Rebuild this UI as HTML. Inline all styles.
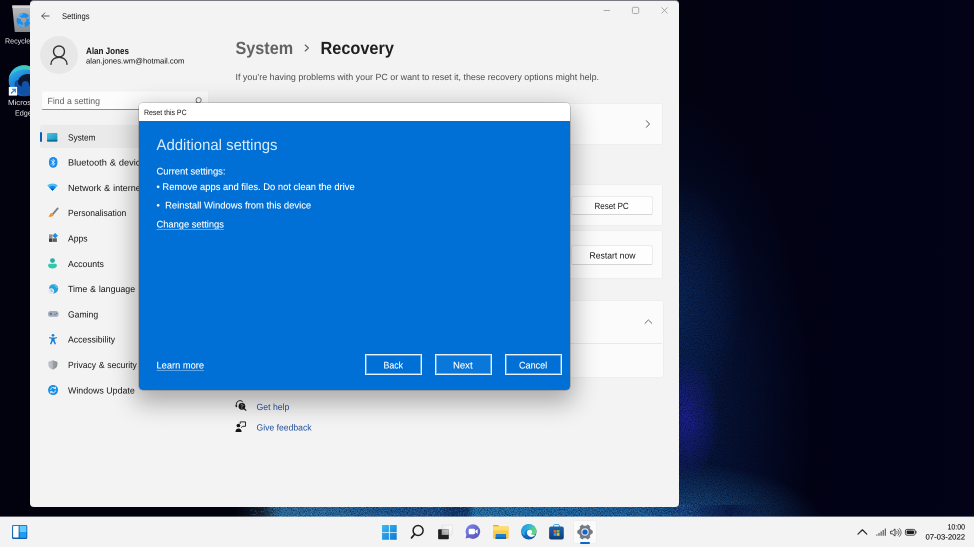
<!DOCTYPE html>
<html lang="en">
<head>
<meta charset="utf-8">
<title>Settings - System - Recovery</title>
<style>
*{box-sizing:border-box;margin:0;padding:0}
html,body{width:974px;height:547px;overflow:hidden}
body{position:relative;background:#02020f;font-family:"Liberation Sans",sans-serif;color:#1c1c1c}
.abs{position:absolute}
svg{position:absolute;overflow:visible}
.t{position:absolute;white-space:pre;line-height:1;will-change:transform;transform-origin:0 0;text-rendering:geometricPrecision}
.s{display:inline-block;transform-origin:0 0}
.layer{position:absolute;left:0;top:0;width:974px;height:547px}
#desk{overflow:hidden;
 background:
  radial-gradient(ellipse 34px 62px at 686px 418px, rgba(30,34,156,.85), rgba(30,34,156,0) 100%),
  radial-gradient(ellipse 135px 60px at 688px 524px, rgba(30,90,150,.95), rgba(30,90,150,0) 100%),
  radial-gradient(ellipse 70px 120px at 674px 300px, rgba(12,44,100,.8), rgba(12,44,100,0) 100%),
  radial-gradient(ellipse 150px 330px at 662px 420px, rgba(10,34,86,.9), rgba(10,34,86,0) 100%),
  linear-gradient(90deg,#02020e 0%,#02020e 60%,#020216 85%,#020218 100%);}
#strip{position:absolute;left:0;top:505px;width:974px;height:12px;
 background:linear-gradient(90deg,rgba(2,2,14,0) 0px,rgba(2,2,14,0) 235px,#14222f 262px,#2f6f9f 280px,#2a6da3 330px,#1f5c96 380px,#1b4f8c 440px,#123a6e 452px,#123a6e 468px,#2676ae 474px,#1f6aa6 560px,#1d5f9c 640px,#163f7c 690px,#0b1d4c 730px,rgba(2,2,20,0) 770px)}
#win{position:absolute;left:30px;top:0;width:649px;height:507px;border-top:1px solid #777a80;background:#f3f3f3;border-radius:4px;overflow:hidden}
#wi{position:absolute;left:-30px;top:-1px;width:974px;height:547px}
#task{position:absolute;left:0;top:516px;width:974px;height:31px;background:#f3f3f3;background-clip:padding-box;border-top:1px solid rgba(243,243,243,.4)}
#ti{position:absolute;left:0;top:-517px;width:974px;height:547px}
.card{position:absolute;background:#fbfbfb;border:.8px solid #eeeeee;border-radius:2.5px}
.btn{position:absolute;background:#fefefe;border:.8px solid #ebebeb;border-bottom-color:#d6d6d6;border-radius:2.5px}
#dlg{position:absolute;left:139.2px;top:102.5px;width:430.6px;height:287.3px;border-radius:4px;background:linear-gradient(#fff 0,#fff 18.4px,#0070d6 18.4px);overflow:hidden}
#di{position:absolute;left:-139.2px;top:-102.5px;width:974px;height:547px}
#dlgsh{position:absolute;left:139.2px;top:102.5px;width:430.6px;height:287.3px;border-radius:4px;box-shadow:0 9px 24px 4px rgba(0,0,0,.3),0 0 0 .6px rgba(90,90,90,.45)}
#dlgbar{position:absolute;left:139px;top:102px;width:431px;height:19.3px;background:#fff}
.dbtn{position:absolute;top:354px;width:57.5px;height:21px;border:1px solid #e6f3ff;box-shadow:inset 0 0 0 1px rgba(230,243,255,.42);background:#0070d6}
</style>
</head>
<body>
<div id="desk" class="layer"></div>
<div id="strip"></div>
<svg style="left:230px;top:100px" width="600" height="417" viewBox="0 0 600 417">
  <defs>
    <filter id="grain" x="0" y="0" width="100%" height="100%" color-interpolation-filters="sRGB">
      <feTurbulence type="fractalNoise" baseFrequency="0.85" numOctaves="2" seed="7" result="n"/>
      <feColorMatrix in="n" type="matrix" values="0 0 0 0 0.01  0 0 0 0 0.02  0 0 0 0 0.08  2.600 0 0 0 -1.050"/>
    </filter>
    <filter id="grain2" x="0" y="0" width="100%" height="100%" color-interpolation-filters="sRGB">
      <feTurbulence type="fractalNoise" baseFrequency="0.7" numOctaves="2" seed="3" result="n"/>
      <feColorMatrix in="n" type="matrix" values="0 0 0 0 0.35  0 0 0 0 0.62  0 0 0 0 0.85  0 2.400 0 0 -1.250"/>
    </filter>
  </defs>
  <rect x="0" y="0" width="600" height="417" filter="url(#grain)" opacity=".55"/>
  <rect x="20" y="404" width="450" height="13" filter="url(#grain2)" opacity=".5"/>
</svg>

<div id="icons" class="layer">
  <svg style="left:0;top:0" width="60" height="120" viewBox="0 0 60 120">
    <defs>
      <linearGradient id="rb1" x1="0" y1="0" x2="0" y2="1"><stop offset="0" stop-color="#bdbfc2"/><stop offset="1" stop-color="#85888d"/></linearGradient>
      <linearGradient id="eg1" x1="0" y1="0" x2=".6" y2="1"><stop offset="0" stop-color="#3cc4ec"/><stop offset=".45" stop-color="#1f8bdc"/><stop offset="1" stop-color="#135fb8"/></linearGradient>
      <linearGradient id="eg2" x1="0" y1="0" x2="1" y2="0"><stop offset="0" stop-color="#38bfe6"/><stop offset="1" stop-color="#48d196"/></linearGradient>
      <clipPath id="ecl"><circle cx="24.200" cy="80.800" r="15.500"/></clipPath>
    </defs>
    <!-- recycle bin -->
    <path d="M12.200 5.400h24l-2.500 26.500H14.800z" fill="url(#rb1)"/>
    <path d="M12.200 5.400h24l-.25 2.600H12.450z" fill="#d2d4d6"/>
    <circle cx="23.600" cy="20.200" r="4.900" fill="none" stroke="#1f8de9" stroke-width="4.400" stroke-dasharray="8.100 2.160" transform="rotate(-20 23.600 20.200)"/>
    <circle cx="23.600" cy="20.200" r="6.100" fill="none" stroke="#56b2f6" stroke-width="1.600" stroke-dasharray="5.500 7.280" transform="rotate(-35 23.600 20.200)"/>
    <!-- edge -->
    <circle cx="24.200" cy="80.800" r="15.500" fill="url(#eg1)"/>
    <g clip-path="url(#ecl)">
      <path d="M8.700 78c1-9 8-13 15.500-13s14 4 15.500 12c-3-5-9-7.500-15.500-7.500S12 73 8.700 78z" fill="url(#eg2)"/>
      <path d="M14.500 84c0 7.500 6.500 13 14 13 5 0 9-2 11-5V80H18c-2 0-3.500 2-3.500 4z" fill="#1252a6"/>
      <path d="M18 82.500c0-5 4.500-8.500 9.500-8.500 5.500 0 9.500 3.500 9.500 8 0 3-2 5-5 5-2 0-3-1-3-2.500 0-3-3-4.500-5.500-3-1.500 1-2 3-1.500 5-2-.500-4-2-4-4z" fill="#0b1734"/>
    </g>
    <rect x="8.800" y="86.900" width="8.300" height="8.700" fill="#fff"/>
    <path d="M11 93.500l4.200-4.200m-3.200-.1h3.300v3.300" stroke="#2a7fd8" stroke-width="1.100" fill="none"/>
  </svg>
<div class="t" style="left:5px;top:38px;font-size:14.8px;color:#e6e6e6;transform:scale(0.5);"><span class="s" style="transform:scaleX(0.9600);">Recycle Bin</span></div>
<div class="t" style="left:8px;top:99px;font-size:14.8px;color:#e6e6e6;transform:translate(0px,0.5px) scale(0.5);"><span class="s" style="transform:scaleX(1.0628);">Microsoft</span></div>
<div class="t" style="left:15px;top:110px;font-size:14.8px;color:#e6e6e6;transform:scale(0.5);"><span class="s" style="transform:scaleX(0.9722);">Edge</span></div>
</div>

<div id="win"><div id="wi">
  <!-- title bar -->
  <svg style="left:40.6px;top:12.3px" width="9" height="8" viewBox="0 0 9 8"><path d="M8.1 4H.9M3.9 .9L.8 4 3.9 7.1" fill="none" stroke="#3a3a3a" stroke-width=".85" stroke-linecap="round" stroke-linejoin="round"/></svg>
  <svg style="left:603px;top:6px" width="70" height="9" viewBox="0 0 70 9">
    <path d="M.6 4.500h6.400" stroke="#9c9c9c" stroke-width=".85" fill="none"/>
    <rect x="29.400" y="1.300" width="6.300" height="6.200" rx="1.100" fill="none" stroke="#9c9c9c" stroke-width=".85"/>
    <path d="M58.500 1.300l6 6.200m0-6.200l-6 6.200" stroke="#9c9c9c" stroke-width=".85" fill="none"/>
  </svg>
  <!-- user -->
  <div class="abs" style="left:40px;top:36px;width:38px;height:38px;border-radius:50%;background:#e7e7e7"></div>
  <svg style="left:49px;top:44px" width="20" height="22" viewBox="0 0 20 22"><circle cx="10" cy="7.5" r="5.5" fill="none" stroke="#333" stroke-width="1.45"/><path d="M2 20.300c0-9.400 16-9.400 16 0" fill="none" stroke="#333" stroke-width="1.45" stroke-linecap="round"/></svg>
  <!-- search -->
  <div class="abs" style="left:41px;top:91px;width:168px;height:19.400px;background:#fcfcfc;border:1px solid #f0f0f0;border-top-color:#f7f7f7;border-bottom:1px solid #8f8f8f;border-radius:2.500px"></div>
  <svg style="left:193.100px;top:95.700px" width="10" height="10" viewBox="0 0 10 10"><circle cx="5.600" cy="4.200" r="2.600" fill="none" stroke="#606060" stroke-width=".85"/><path d="M3.700 6.200L1.500 8.500" stroke="#606060" stroke-width=".85" stroke-linecap="round"/></svg>
  <!-- nav selection -->
  <div class="abs" style="left:40px;top:125px;width:169px;height:23px;background:#eaeaea;border-radius:3px"></div>
  <div class="abs" style="left:40px;top:132px;width:2px;height:10px;background:#0a5fb4;border-radius:1px"></div>
    
  <!-- System -->
  <svg style="left:47.300px;top:132.700px" width="10.400" height="8.700" viewBox="0 0 10.6 8.8">
    <defs><linearGradient id="gsys" x1="0" y1="0" x2="1" y2="1"><stop offset="0" stop-color="#45c8e6"/><stop offset="1" stop-color="#168fba"/></linearGradient></defs>
    <rect x="0" y="0" width="10.6" height="8.6" rx=".9" fill="url(#gsys)"/>
    <rect x="0" y="6.9" width="10.6" height="1.7" rx=".6" fill="#0e6f97"/>
  </svg>
  <!-- Bluetooth -->
  <svg style="left:48.7px;top:156.6px" width="8.4" height="10.8" viewBox="0 0 8.4 10.8">
    <rect x="0" y="0" width="8.4" height="10.8" rx="4.2" fill="#1b8cf0"/>
    <path d="M2.5 3.6l3.2 3.3-1.6 1.6V2.3l1.6 1.6-3.2 3.3" fill="none" stroke="#fff" stroke-width=".75" stroke-linejoin="round" stroke-linecap="round"/>
  </svg>
  <!-- Network -->
  <svg style="left:47.4px;top:183.4px" width="11" height="8" viewBox="0 0 11 8">
    <path d="M5.5 7.8L.2 2.6C3-.3 8-.3 10.8 2.6z" fill="#49bdf5"/>
    <path d="M5.5 7.8L2 4.3c1.9-1.9 5.1-1.9 7 0z" fill="#1785e0"/>
    <path d="M5.5 7.8L3.7 6c1-1 2.600-1 3.600 0z" fill="#0a5fc0"/>
  </svg>
  <!-- Personalisation -->
  <svg style="left:48px;top:207px" width="11" height="11" viewBox="0 0 11 11">
    <path d="M9.700 1.400L4.800 7.100" stroke="#7b828d" stroke-width="1.9" stroke-linecap="round" fill="none"/>
    <path d="M4 5.900c.9.300 1.500.900 1.800 1.800C5 9.400 2.700 10.200.4 9.600c.9-.8 1.100-1.500 1.600-2.400.4-.8 1.100-1.300 2-1.300z" fill="#ee8f2c"/>
    <path d="M3.900 6.300c.6.200 1 .6 1.300 1.200-.6.600-1.400.9-2.200 1 .4-.7.500-1.500.9-2.200z" fill="#f7b463" opacity=".7"/>
  </svg>
  <!-- Apps -->
  <svg style="left:49px;top:232.700px" width="9" height="9" viewBox="0 0 9 9">
    <rect x="0" y="1.400" width="3.500" height="3.500" fill="#8d9197"/>
    <rect x="0" y="5.300" width="3.500" height="3.600" fill="#3a3d42"/>
    <rect x="3.900" y="5.300" width="4" height="3.600" fill="#5a5f67"/>
    <path d="M6.200 .2l2.500 2.500-2.500 2.500-2.500-2.500z" fill="#1b8de8" stroke="#1b8de8" stroke-width=".5" stroke-linejoin="round"/>
  </svg>
  <!-- Accounts -->
  <svg style="left:48.300px;top:258.300px" width="9" height="10.600" viewBox="0 0 9 10.6">
    <circle cx="4.500" cy="2.600" r="2.450" fill="#27b09a"/>
    <path d="M.1 7.400c0-1 .7-1.600 1.600-1.600h5.600c.9 0 1.600.6 1.600 1.600 0 2-1.900 3-4.400 3S.1 9.400.1 7.400z" fill="#35c7ae"/>
  </svg>
  <!-- Time & language -->
  <svg style="left:47.900px;top:283.800px" width="10.400" height="10.400" viewBox="0 0 11 11">
    <circle cx="5.900" cy="5.100" r="4.900" fill="#2aa2dc"/>
    <path d="M5.900.2a4.900 4.900 0 0 1 4.900 4.900C9 4 7 2.500 5.900.2z" fill="#58c4ee"/>
    <circle cx="3.300" cy="7.500" r="3.100" fill="#e4e9ef"/>
    <path d="M3.300 5.900v1.700h1.200" fill="none" stroke="#7a8798" stroke-width=".7" stroke-linecap="round"/>
  </svg>
  <!-- Gaming -->
  <svg style="left:47.800px;top:311.100px" width="10.600" height="6" viewBox="0 0 10.6 6">
    <rect x="0" y="0" width="10.600" height="5.800" rx="2.900" fill="#a3acbc"/>
    <path d="M2.900 1.800v2.300M1.750 2.950h2.300" stroke="#4d5567" stroke-width=".7"/>
    <circle cx="7.100" cy="3.600" r=".65" fill="#3d72c8"/><circle cx="8.400" cy="2.300" r=".65" fill="#3d72c8"/>
  </svg>
  <!-- Accessibility -->
  <svg style="left:48.800px;top:334px" width="8" height="10.400" viewBox="0 0 8 10.4">
    <circle cx="4" cy="1.300" r="1.350" fill="#1a7fd6"/>
    <path d="M.2 2.900c2.500.7 5.100.7 7.600 0l.3 1.100c-.9.400-1.700.6-2.500.7l.1 1.700 1.300 3.500-1.300.5L4 6.800 2.300 10.400 1 9.900l1.300-3.500.1-1.700C1.600 4.600.8 4.400-.1 4z" fill="#1a7fd6"/>
  </svg>
  <!-- Privacy -->
  <svg style="left:47.900px;top:359.900px" width="9.700" height="9.800" viewBox="0 0 9.800 10">
    <defs><linearGradient id="gsh" x1="0" y1="0" x2="1" y2="0"><stop offset="0" stop-color="#c3c7cc"/><stop offset=".5" stop-color="#b2b6bc"/><stop offset=".5" stop-color="#9a9fa6"/><stop offset="1" stop-color="#8d9299"/></linearGradient></defs>
    <path d="M4.900.1c1.400 1 2.900 1.500 4.700 1.600v3c0 2.500-1.900 4.300-4.700 5.200C2.100 9 .2 7.200.2 4.700v-3C2 1.600 3.500 1.100 4.900.1z" fill="url(#gsh)"/>
  </svg>
  <!-- Windows Update -->
  <svg style="left:47.600px;top:384.500px" width="10.200" height="10.200" viewBox="0 0 10.600 10.600">
    <circle cx="5.300" cy="5.300" r="5.200" fill="#1a8fe0"/>
    <path d="M2.700 4.600a2.800 2.800 0 0 1 4.900-1.100M7.900 6a2.800 2.800 0 0 1-4.900 1.100" fill="none" stroke="#fff" stroke-width=".85" stroke-linecap="round"/>
    <path d="M7.800 2.200v1.500H6.300M2.800 8.400V6.900h1.500" fill="none" stroke="#fff" stroke-width=".85" stroke-linecap="round" stroke-linejoin="round"/>
  </svg>

  <!-- cards -->
  <div class="card" style="left:235px;top:102.800px;width:428.300px;height:42.100px"></div>
  <svg style="left:644.200px;top:119.400px" width="8" height="10" viewBox="0 0 8 10"><path d="M2.400 1.700L5.500 5 2.400 8.300" fill="none" stroke="#555" stroke-width="1" stroke-linecap="round" stroke-linejoin="round"/></svg>
  <div class="card" style="left:235px;top:183.900px;width:428.300px;height:42.100px"></div>
  <div class="btn" style="left:571.400px;top:195.700px;width:82px;height:19.800px"></div>
  <div class="card" style="left:235px;top:229.900px;width:428.300px;height:49.200px"></div>
  <div class="btn" style="left:571.400px;top:244.900px;width:82px;height:19.800px"></div>
  <div class="card" style="left:235px;top:300.200px;width:428.500px;height:78.200px"></div>
  <div class="abs" style="left:236px;top:343px;width:426px;height:1px;background:#e9e9e9"></div>
  <svg style="left:643px;top:317px" width="11" height="9" viewBox="0 0 11 9"><path d="M2 6.3L5.4 3 8.8 6.3" fill="none" stroke="#5a5a5a" stroke-width=".9" stroke-linecap="round" stroke-linejoin="round"/></svg>
  <!-- heading chevron -->
  <svg style="left:303px;top:43px" width="8" height="10" viewBox="0 0 8 10"><path d="M2.2 2L5.4 5 2.2 8" fill="none" stroke="#5c5c5c" stroke-width="1.1" stroke-linecap="round" stroke-linejoin="round"/></svg>
  <!-- help links icons -->
  <svg style="left:234.600px;top:399.400px" width="12" height="12" viewBox="0 0 12 12">
    <path d="M1.300 7.200V5.300a3.700 3.700 0 0 1 6.600-2.300" fill="none" stroke="#222" stroke-width=".95"/>
    <rect x=".6" y="5.800" width="1.500" height="2.400" rx=".6" fill="#222"/>
    <circle cx="6.900" cy="7.300" r="3.350" fill="#1a1a1a"/>
    <path d="M9.200 9.700l1.700 1.500" stroke="#1a1a1a" stroke-width="1.200" stroke-linecap="round"/>
    <circle cx="6.900" cy="9" r=".5" fill="#f0f0f0"/><path d="M6.100 6.400a.85.85 0 1 1 1.200.9c-.3.200-.4.400-.4.800" stroke="#f0f0f0" stroke-width=".65" fill="none"/>
  </svg>
  <svg style="left:234.600px;top:420.600px" width="12" height="12" viewBox="0 0 12 12">
    <circle cx="3.400" cy="4.500" r="1.850" fill="#161616"/>
    <path d="M.5 10.900c0-4.400 6.100-4.400 6.100 0z" fill="#161616"/>
    <path d="M5.200 2.500V.9h5.300v4.400H7.800L6.400 6.400" fill="none" stroke="#222" stroke-width=".95" stroke-linejoin="round" stroke-linecap="round"/>
  </svg>
<div class="t" style="left:62px;top:12px;font-size:16.6px;color:#141414;transform:translate(0px,0.5px) scale(0.5);"><span class="s" style="transform:scaleX(0.9171);">Settings</span></div>
<div class="t" style="left:86px;top:46px;font-size:18.4px;font-weight:700;color:#141414;letter-spacing:-0.044px;transform:translate(0px,0.5px) scale(0.5);"><span class="s" style="transform:scaleX(0.8800);">Alan Jones</span></div>
<div class="t" style="left:86px;top:57px;font-size:15.4px;color:#111;transform:translate(0px,0.5px) scale(0.5);"><span class="s" style="transform:scaleX(0.9991);">alan.jones.wm@hotmail.com</span></div>
<div class="t" style="left:47px;top:97px;font-size:17.8px;color:#606060;transform:translate(0.5px,0px) scale(0.5);"><span class="s" style="transform:scaleX(0.9836);">Find a setting</span></div>
<div class="t" style="left:68px;top:133px;font-size:17.8px;color:#141414;transform:translate(0px,0.5px) scale(0.5);"><span class="s" style="transform:scaleX(0.9275);">System</span></div>
<div class="t" style="left:68px;top:158px;font-size:17.8px;color:#141414;transform:translate(0px,0.5px) scale(0.5);"><span class="s" style="transform:scaleX(1.0341);word-spacing:.8px">Bluetooth &amp; devices</span></div>
<div class="t" style="left:68px;top:184px;font-size:17.8px;color:#141414;transform:scale(0.5);"><span class="s" style="transform:scaleX(1.0184);word-spacing:.8px">Network &amp; internet</span></div>
<div class="t" style="left:68px;top:209px;font-size:17.8px;color:#141414;transform:scale(0.5);"><span class="s" style="transform:scaleX(0.9591);">Personalisation</span></div>
<div class="t" style="left:68px;top:234px;font-size:17.8px;color:#141414;transform:translate(0px,0.5px) scale(0.5);"><span class="s" style="transform:scaleX(0.9622);">Apps</span></div>
<div class="t" style="left:68px;top:260px;font-size:17.8px;color:#141414;transform:scale(0.5);"><span class="s" style="transform:scaleX(0.9817);">Accounts</span></div>
<div class="t" style="left:68px;top:285px;font-size:17.8px;color:#141414;transform:scale(0.5);"><span class="s" style="transform:scaleX(0.9913);word-spacing:.8px">Time &amp; language</span></div>
<div class="t" style="left:68px;top:310px;font-size:17.8px;color:#141414;transform:translate(0px,0.5px) scale(0.5);"><span class="s" style="transform:scaleX(0.9668);">Gaming</span></div>
<div class="t" style="left:68px;top:335px;font-size:17.8px;color:#141414;transform:translate(0px,0.5px) scale(0.5);"><span class="s" style="transform:scaleX(0.9727);">Accessibility</span></div>
<div class="t" style="left:68px;top:361px;font-size:17.8px;color:#141414;transform:scale(0.5);"><span class="s" style="transform:scaleX(0.9629);word-spacing:.8px">Privacy &amp; security</span></div>
<div class="t" style="left:68px;top:386px;font-size:17.8px;color:#141414;transform:translate(0px,0.5px) scale(0.5);"><span class="s" style="transform:scaleX(0.9939);">Windows Update</span></div>
<div class="t" style="left:235px;top:39px;font-size:35.2px;font-weight:700;color:#626262;transform:translate(0.5px,0.5px) scale(0.5);"><span class="s" style="transform:scaleX(0.9202);">System</span></div>
<div class="t" style="left:320px;top:39px;font-size:35.2px;font-weight:700;color:#1f1f1f;transform:translate(0.5px,0.5px) scale(0.5);"><span class="s" style="transform:scaleX(0.9265);">Recovery</span></div>
<div class="t" style="left:235px;top:73px;font-size:17.8px;color:#4c4c4c;transform:translate(0.5px,0px) scale(0.5);"><span class="s" style="transform:scaleX(1.0008);">If you’re having problems with your PC or want to reset it, these recovery options might help.</span></div>
<div class="t" style="left:594px;top:202px;font-size:17.8px;color:#141414;transform:translate(0.5px,0px) scale(0.5);"><span class="s" style="transform:scaleX(0.8989);">Reset PC</span></div>
<div class="t" style="left:589px;top:251px;font-size:17.8px;color:#141414;transform:translate(0.5px,0.5px) scale(0.5);"><span class="s" style="transform:scaleX(0.9697);">Restart now</span></div>
<div class="t" style="left:256px;top:403px;font-size:17.8px;color:#1f4f9c;transform:translate(0.5px,0px) scale(0.5);"><span class="s" style="transform:scaleX(0.9789);">Get help</span></div>
<div class="t" style="left:256px;top:423px;font-size:17.8px;color:#1f4f9c;transform:translate(0.5px,0.5px) scale(0.5);"><span class="s" style="transform:scaleX(0.9695);">Give feedback</span></div>
</div></div>

<div id="task"><div id="ti">
    <!-- widgets -->
  <svg style="left:11.800px;top:524.900px" width="15.300" height="13.900" viewBox="0 0 15.3 13.9">
    <defs><linearGradient id="gwd" x1="0" y1="0" x2="0" y2="1"><stop offset="0" stop-color="#2578c4"/><stop offset="1" stop-color="#0f5cae"/></linearGradient></defs>
    <rect x="0" y="0" width="15.300" height="13.900" rx="1.200" fill="url(#gwd)"/>
    <rect x="1.100" y="1" width="5.500" height="11.500" rx=".4" fill="#fbfdff"/>
    <rect x="7.700" y="1" width="6.600" height="6" fill="#62caff"/>
    <rect x="7.700" y="7" width="6.600" height="5.800" fill="#1c9df2"/>
  </svg>
  <!-- start -->
  <svg style="left:381.900px;top:524.800px" width="14.700" height="14.700" viewBox="0 0 14.7 14.7">
    <defs><linearGradient id="gst" x1="0" y1="0" x2="1" y2="1"><stop offset="0" stop-color="#3bbcf5"/><stop offset="1" stop-color="#0b78d6"/></linearGradient></defs>
    <path d="M0 0h6.900v6.900H0zM7.800 0h6.900v6.900H7.800zM0 7.800h6.900v6.900H0zM7.800 7.800h6.900v6.900H7.800z" fill="url(#gst)"/>
  </svg>
  <!-- search -->
  <svg style="left:410px;top:524px" width="16" height="16" viewBox="0 0 16 16">
    <circle cx="8.100" cy="6.500" r="5" fill="none" stroke="#1f1f1f" stroke-width="1.500"/>
    <path d="M4.600 10.200L1.500 13.900" stroke="#1f1f1f" stroke-width="1.700" stroke-linecap="round"/>
  </svg>
  <!-- task view -->
  <svg style="left:438px;top:524.600px" width="15" height="15" viewBox="0 0 15 15">
    <defs><linearGradient id="gtv" x1="0" y1="1" x2="1" y2="0"><stop offset="0" stop-color="#e4e4e4"/><stop offset="1" stop-color="#ffffff"/></linearGradient>
    <linearGradient id="gtv2" x1="0" y1="1" x2="1" y2="0"><stop offset="0" stop-color="#9a9a9a"/><stop offset="1" stop-color="#cfcfcf"/></linearGradient></defs>
    <rect x="3.700" y=".2" width="10.600" height="9.700" rx=".8" fill="url(#gtv)" stroke="#d6d6d6" stroke-width=".5"/>
    <rect x=".1" y="4.300" width="10.700" height="9.900" rx=".8" fill="#222"/>
    <rect x="3.700" y="4.300" width="7.100" height="5.600" fill="url(#gtv2)"/>
  </svg>
  <!-- chat -->
  <svg style="left:464.900px;top:524.300px" width="16" height="16" viewBox="0 0 16 16">
    <defs><linearGradient id="gch" x1="0" y1="0" x2="1" y2="1"><stop offset="0" stop-color="#8084e6"/><stop offset="1" stop-color="#4f52ba"/></linearGradient></defs>
    <circle cx="7.900" cy="7.600" r="7.300" fill="url(#gch)"/>
    <path d="M1.600 10.500L.6 14.600l4.400-1.300z" fill="#5c5fd0"/>
    <rect x="3.700" y="4.700" width="6.200" height="5.600" rx="1.100" fill="#fff"/>
    <path d="M10.300 6.800l2.300-1.500v4.400l-2.300-1.500z" fill="#fff"/>
  </svg>
  <!-- explorer -->
  <svg style="left:493.300px;top:525px" width="16" height="14" viewBox="0 0 16 14">
    <path d="M0 1.400C0 .6.500.1 1.300.1h3.800l1.500 1.600H0z" fill="#e5a51c"/>
    <rect x="0" y="1.600" width="15.700" height="12.200" rx="1" fill="#fbcb45"/>
    <rect x="0" y="1.600" width="15.700" height="4" rx="1" fill="#ffdd6e"/>
    <path d="M2.600 9.900c0-.6.400-1 1-1h8.500c.6 0 1 .4 1 1v3.900H2.600z" fill="#1b7fd0"/>
    <rect x="2.600" y="12.300" width="10.500" height="1.500" fill="#0f5da8"/>
  </svg>
  <!-- edge -->
  <svg style="left:521.200px;top:523.700px" width="15.700" height="15.700" viewBox="0 0 32 32">
    <defs>
      <linearGradient id="ge1" x1="0" y1="0" x2="0" y2="1"><stop offset="0" stop-color="#2fa8e8"/><stop offset=".5" stop-color="#1a7fd6"/><stop offset="1" stop-color="#0f57a8"/></linearGradient>
      <linearGradient id="ge2" x1="0" y1="0" x2="1" y2=".35"><stop offset="0" stop-color="#2190dc"/><stop offset=".45" stop-color="#2eaede"/><stop offset=".75" stop-color="#48c8a8"/><stop offset="1" stop-color="#6ad66a"/></linearGradient>
      <clipPath id="ecl2"><circle cx="16" cy="16" r="15.800"/></clipPath>
    </defs>
    <circle cx="16" cy="16" r="15.800" fill="url(#ge1)"/>
    <g clip-path="url(#ecl2)">
      <path d="M.5 13C3-4 29-4 31.700 13c.8 5.500-2.700 9.500-7.200 9.500-2.500 0-4-1-4-2.500 0-1.200 1.500-2 1.500-4.500 0-4-6-6.500-11-3C7 15.500 6.500 20 8.500 24 3 21-.3 17 .5 13z" fill="url(#ge2)"/>
      <path d="M12 17.500c0-3.300 2.800-5.800 6-5.800 2.800 0 4.800 1.800 4.800 4 0 2.300-1.600 3-1.600 4.400 0 1.400 1.400 2.400 3.800 2.400 1.500 0 3-.4 4.300-1.200-1.500 3-4.800 5-8.500 5C16 26.300 12 22.500 12 17.500z" fill="#f6fafe"/>
    </g>
  </svg>
  <!-- store -->
  <svg style="left:549.200px;top:524px" width="15" height="16" viewBox="0 0 15 16">
    <defs><linearGradient id="gsto" x1="0" y1="0" x2="0" y2="1"><stop offset="0" stop-color="#1d62ae"/><stop offset="1" stop-color="#113c76"/></linearGradient></defs>
    <path d="M4.500 3V1.900C4.500 1 5 .5 5.900.5h3.200c.9 0 1.400.5 1.400 1.400V3" fill="none" stroke="#4ba6ee" stroke-width="1"/>
    <rect x=".1" y="2.500" width="14.700" height="13" rx="1.900" fill="url(#gsto)"/>
    <rect x="4.700" y="6" width="2.700" height="2.700" fill="#e8603c"/><rect x="7.800" y="6" width="2.700" height="2.700" fill="#7db83a"/>
    <rect x="4.700" y="9.100" width="2.700" height="2.700" fill="#2aa6e8"/><rect x="7.800" y="9.100" width="2.700" height="2.700" fill="#f0b82a"/>
  </svg>
  <!-- settings active -->
  <div class="abs" style="left:573px;top:520px;width:24px;height:24px;background:#fbfbfb;border:1px solid #eeeeee;border-radius:2.500px"></div>
  <svg style="left:577px;top:523.900px" width="16" height="16" viewBox="-8 -8 16 16">
    <g fill="#717984" stroke="#717984" stroke-width=".8" stroke-linejoin="round">
      <circle r="5.900"/>
      <rect x="4" y="-1.700" width="3.300" height="3.400" rx=".9"/>
      <rect x="4" y="-1.700" width="3.300" height="3.400" rx=".9" transform="rotate(60)"/>
      <rect x="4" y="-1.700" width="3.300" height="3.400" rx=".9" transform="rotate(120)"/>
      <rect x="4" y="-1.700" width="3.300" height="3.400" rx=".9" transform="rotate(180)"/>
      <rect x="4" y="-1.700" width="3.300" height="3.400" rx=".9" transform="rotate(240)"/>
      <rect x="4" y="-1.700" width="3.300" height="3.400" rx=".9" transform="rotate(300)"/>
    </g>
    <circle r="3.700" fill="#dfe6f0"/>
    <circle r="2.600" fill="#1863c2"/>
  </svg>
  <div class="abs" style="left:580px;top:542px;width:10px;height:2px;border-radius:1px;background:#0b66c9"></div>
  <!-- tray -->
  <svg style="left:857px;top:528px" width="11" height="8" viewBox="0 0 11 8"><path d="M1 6.100L5.400 1.800 9.800 6.100" fill="none" stroke="#2a2a2a" stroke-width="1.250" stroke-linecap="round" stroke-linejoin="round"/></svg>
  <svg style="left:875.500px;top:528px" width="10" height="8" viewBox="0 0 10 8">
    <path d="M.9 7.700V6.500M3 7.700V5.100M5.100 7.700V3.600M7.200 7.700V2.100M9.300 7.700V.6" stroke="#4a4a4a" stroke-width="1.050" fill="none"/>
  </svg>
  <svg style="left:889.800px;top:527.700px" width="12" height="9" viewBox="0 0 12 9">
    <path d="M.6 3.200h1.800L5 .9v7.200L2.400 5.800H.6z" fill="none" stroke="#333" stroke-width=".9" stroke-linejoin="round"/>
    <path d="M6.500 3c.9.900.9 2.100 0 3M8 1.700c1.600 1.600 1.600 4 0 5.600M9.500.6c2.200 2.200 2.200 5.600 0 7.800" fill="none" stroke="#444" stroke-width=".85" stroke-linecap="round"/>
  </svg>
  <svg style="left:904.800px;top:528.800px" width="12" height="7" viewBox="0 0 12 7">
    <rect x=".4" y=".4" width="9.800" height="5.800" rx="1.600" fill="none" stroke="#2a2a2a" stroke-width=".85"/>
    <rect x="1.600" y="1.600" width="7.400" height="3.400" rx=".8" fill="#1c1c1c"/>
    <path d="M10.900 2.600v1.400" stroke="#2a2a2a" stroke-width="1.100" stroke-linecap="round"/>
  </svg>

<div class="t" style="left:947px;top:523px;font-size:15.2px;color:#0c0c0c;transform:translate(0.5px,0.5px) scale(0.5);"><span class="s" style="transform:scaleX(0.9207);-webkit-text-stroke:.2px #0c0c0c">10:00</span></div>
<div class="t" style="left:925px;top:533px;font-size:15.2px;color:#0c0c0c;transform:translate(0.5px,0.5px) scale(0.5);"><span class="s" style="transform:scaleX(1.0193);-webkit-text-stroke:.2px #0c0c0c">07-03-2022</span></div>
</div></div>

<div id="dlgsh"></div>
<div id="dlg"><div id="di">
  <div class="dbtn" style="left:364.5px"></div>
  <div class="dbtn" style="left:434.5px;background:#0a78da"></div>
  <div class="dbtn" style="left:504.5px"></div>
<div class="t" style="left:144px;top:109px;font-size:15.4px;color:#111;transform:scale(0.5);"><span class="s" style="transform:scaleX(0.9055);">Reset this PC</span></div>
<div class="t" style="left:156px;top:137px;font-size:30.8px;color:rgba(255,255,255,.87);transform:translate(0.5px,0.5px) scale(0.5);"><span class="s" style="transform:scaleX(0.9681);">Additional settings</span></div>
<div class="t" style="left:156px;top:167px;font-size:19.2px;color:#fff;transform:translate(0.5px,0px) scale(0.5);"><span class="s" style="transform:scaleX(0.9802);-webkit-text-stroke:.2px #fff">Current settings:</span></div>
<div class="t" style="left:156px;top:182px;font-size:19.2px;color:#fff;transform:translate(0.5px,0.5px) scale(0.5);"><span class="s" style="transform:scaleX(0.9798);-webkit-text-stroke:.2px #fff">• Remove apps and files. Do not clean the drive</span></div>
<div class="t" style="left:156px;top:201px;font-size:19.2px;color:#fff;transform:translate(0.5px,0px) scale(0.5);"><span class="s" style="transform:scaleX(0.9859);-webkit-text-stroke:.2px #fff">•  Reinstall Windows from this device</span></div>
<div class="t" style="left:156px;top:220px;font-size:19.2px;color:#fff;transform:translate(0.5px,0px) scale(0.5);"><span class="s" style="transform:scaleX(0.9721);-webkit-text-stroke:.2px #fff;padding-bottom:8px;text-decoration:underline;text-underline-offset:3.2px;text-decoration-thickness:1.3px;text-decoration-color:rgba(255,255,255,.75)">Change settings</span></div>
<div class="t" style="left:156px;top:361px;font-size:19.2px;color:#fff;transform:translate(0.5px,0px) scale(0.5);"><span class="s" style="transform:scaleX(0.9682);-webkit-text-stroke:.2px #fff;padding-bottom:8px;text-decoration:underline;text-underline-offset:3.2px;text-decoration-thickness:1.3px;text-decoration-color:rgba(255,255,255,.75)">Learn more</span></div>
<div class="t" style="left:383px;top:361px;font-size:19.2px;color:#fff;transform:translate(0.5px,0px) scale(0.5);"><span class="s" style="transform:scaleX(0.9140);-webkit-text-stroke:.2px #fff">Back</span></div>
<div class="t" style="left:453px;top:361px;font-size:19.2px;color:#fff;transform:scale(0.5);"><span class="s" style="transform:scaleX(0.9936);-webkit-text-stroke:.2px #fff">Next</span></div>
<div class="t" style="left:519px;top:361px;font-size:19.2px;color:#fff;transform:scale(0.5);"><span class="s" style="transform:scaleX(0.9442);-webkit-text-stroke:.2px #fff">Cancel</span></div>
</div></div>
</body>
</html>
